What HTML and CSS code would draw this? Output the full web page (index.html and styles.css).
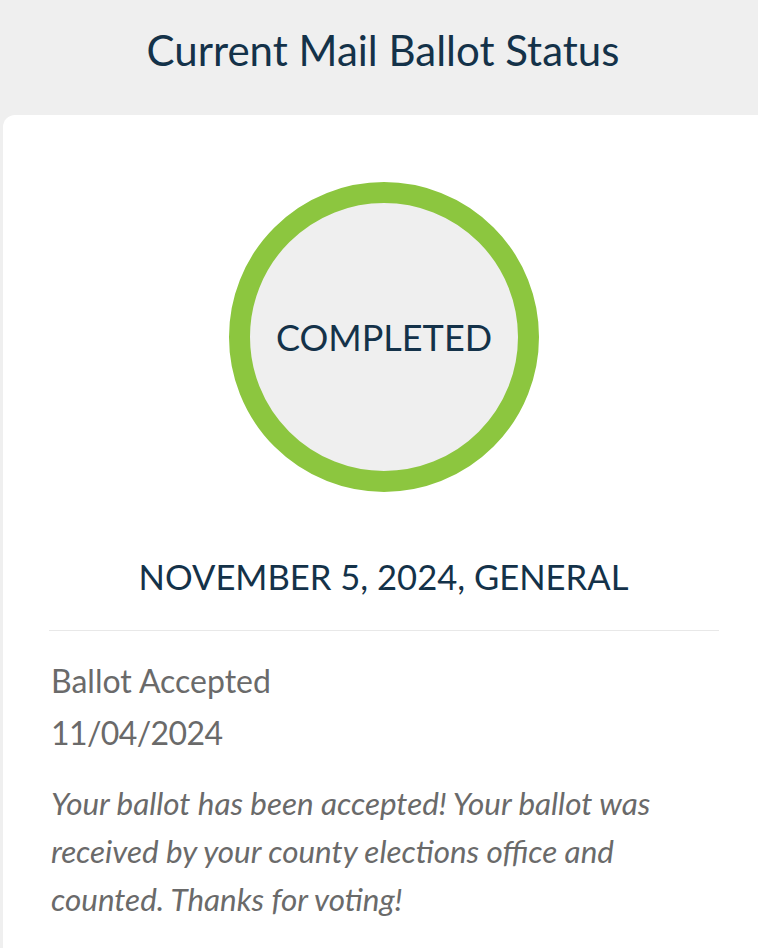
FILE: index.html
```html
<!DOCTYPE html>
<html>
<head>
<meta charset="utf-8">
<link rel="stylesheet" href="styles.css">
</head>
<body>
<div class="page">
  <header class="top">
    <h1 class="title">Current Mail Ballot Status</h1>
  </header>
  <section class="card">
    <div class="ring-wrap">
      <div class="ring">
        <span class="ring-label">COMPLETED</span>
      </div>
    </div>
    <h2 class="election">NOVEMBER 5, 2024, GENERAL</h2>
    <hr class="divider">
    <div class="detail">
      <p class="status">Ballot Accepted</p>
      <p class="date">11/04/2024</p>
      <p class="message">Your ballot has been accepted! Your ballot was received by your county elections office and counted. Thanks for voting!</p>
    </div>
  </section>
</div>
</body>
</html>
```
FILE: styles.css
```css
html, body {
  margin: 0;
  padding: 0;
}
body {
  background: #efefef;
  font-family: "Lato", "Liberation Sans", sans-serif;
  width: 758px;
  height: 948px;
  overflow: hidden;
}
.page {
  display: flex;
  flex-direction: column;
  height: 948px;
}
.top {
  height: 115px;
  flex: none;
  display: flex;
  justify-content: center;
  padding-left: 8px;
}
.title {
  margin: 25px 0 0;
  font-size: 42px;
  font-weight: 400;
  color: #143249;
  line-height: 50px;
}
.card {
  flex: 1;
  margin-left: 3px;
  background: #fff;
  border-radius: 12px 0 0 0;
  padding: 67px 0 0 0;
  overflow: hidden;
}
.ring-wrap {
  display: flex;
  justify-content: center;
  padding-left: 7px;
}
.ring {
  width: 268px;
  height: 268px;
  border: 21px solid #8cc63f;
  border-radius: 50%;
  background: #efefef;
  display: flex;
  align-items: center;
  justify-content: center;
}
.ring-label {
  font-size: 36px;
  color: #143249;
}
.election {
  margin: 64px 0 0;
  text-align: center;
  font-size: 34.6px;
  font-weight: 400;
  color: #143249;
  line-height: 42px;
  padding-left: 6px;
}
.divider {
  margin: 32px 39px 0 46px;
  border: 0;
  border-top: 1px solid #e8e8e8;
}
.detail {
  padding: 24px 0 0 48px;
  color: #6a6a6a;
}
.status, .date {
  margin: 0;
  font-size: 32px;
  line-height: 52px;
}
.date {
  letter-spacing: -0.6px;
}
.message {
  margin: 20px 0 0 0;
  max-width: 660px;
  font-size: 31.4px;
  font-style: italic;
  line-height: 48px;
}
```
